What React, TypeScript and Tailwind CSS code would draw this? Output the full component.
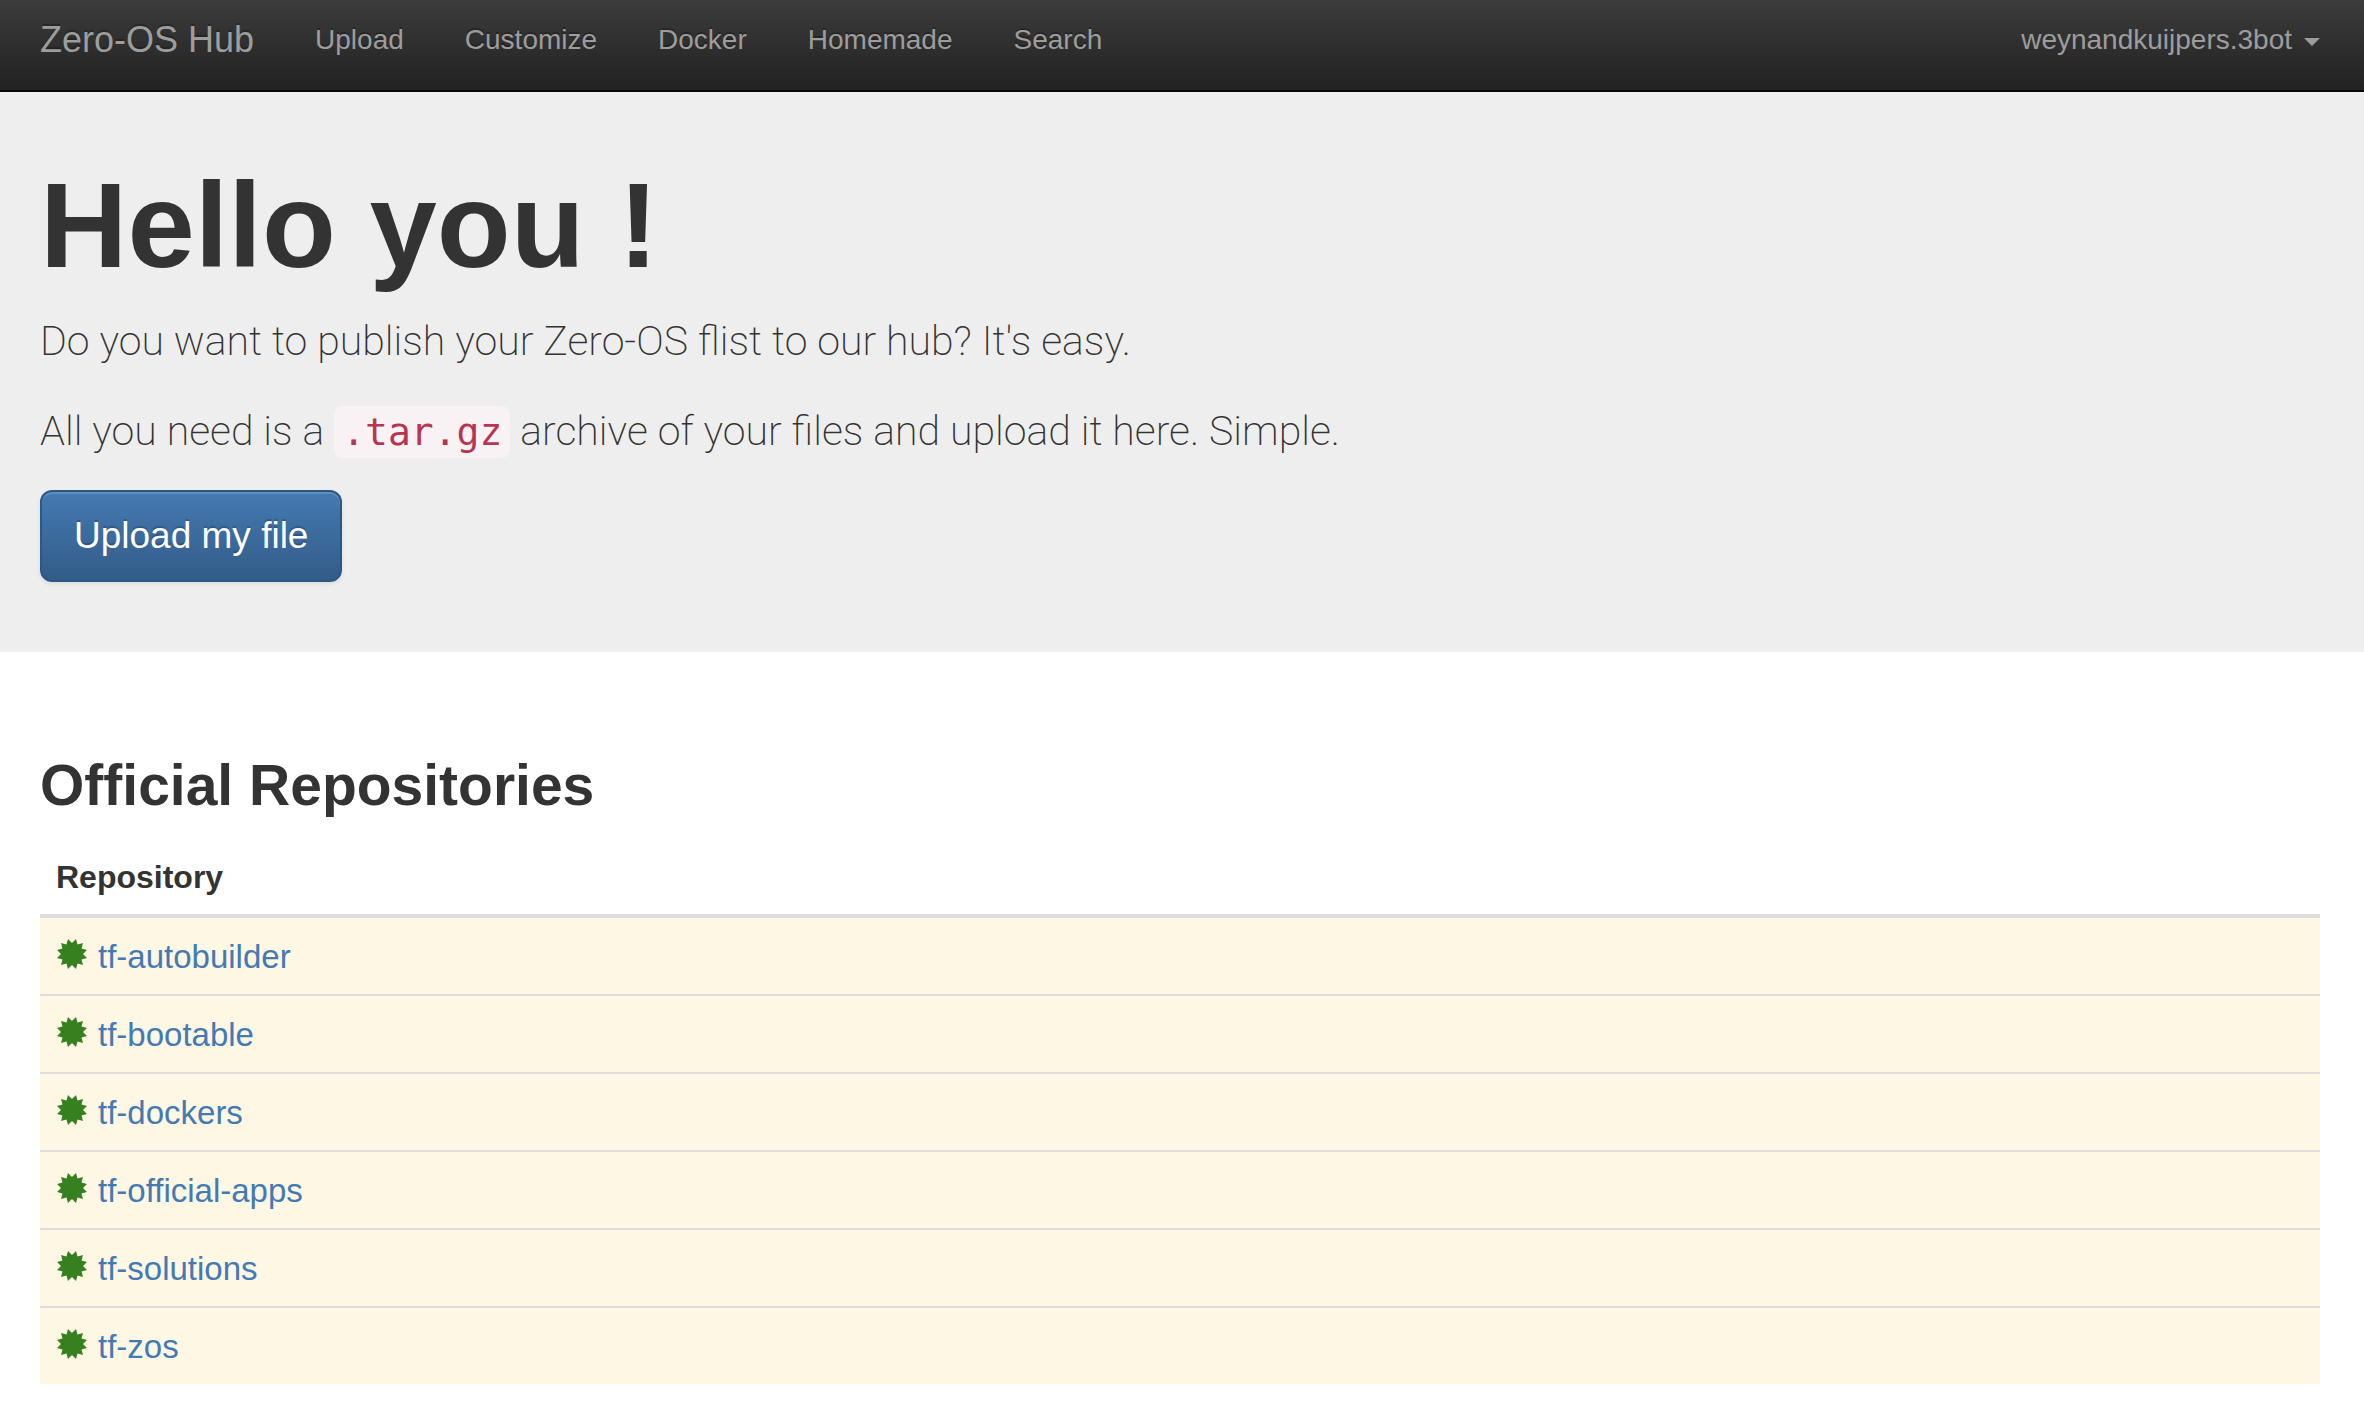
const navLinks = ["Upload", "Customize", "Docker", "Homemade", "Search"];

const repositories = [
  "tf-autobuilder",
  "tf-bootable",
  "tf-dockers",
  "tf-official-apps",
  "tf-solutions",
  "tf-zos",
];

function CertificateIcon() {
  // Twelve-pointed seal, outer radius 15.5 and inner radius 11.
  const points = Array.from({ length: 24 }, (_, i) => {
    const radius = i % 2 === 0 ? 11 : 15.5;
    const angle = (i * Math.PI) / 12;
    return `${(16 + radius * Math.sin(angle)).toFixed(2)},${(16 - radius * Math.cos(angle)).toFixed(2)}`;
  }).join(" ");
  return (
    <svg viewBox="0 0 32 32" className="mt-[3px] size-8 shrink-0" aria-hidden="true">
      <polygon points={points} fill="#378020" />
    </svg>
  );
}

function Navbar() {
  return (
    <header className="border-b-2 border-[#080808] bg-linear-to-b from-[#3c3c3c] to-[#222222] pr-11 pb-2.5 pl-10 text-[28px] text-[#9d9d9d] [text-shadow:0_-2px_0_rgba(0,0,0,0.25)]">
      <nav className="flex h-20 items-center gap-[61px]">
        <a href="#" className="text-4xl">
          Zero-OS Hub
        </a>
        {navLinks.map((label) => (
          <a key={label} href="#">
            {label}
          </a>
        ))}
        <button type="button" className="ml-auto flex items-center gap-3">
          weynandkuijpers.3bot
          <span className="mt-1 border-x-8 border-t-8 border-x-transparent border-t-[#9d9d9d]" />
        </button>
      </nav>
    </header>
  );
}

function Hero() {
  return (
    <section className="bg-[#eeeeee] pt-16 pr-11 pb-[70px] pl-10">
      <h1 className="mb-4 text-[121px] leading-[139px] font-bold">
        Hello you !
      </h1>
      <div className="font-['Roboto',sans-serif] text-[41px] leading-[60px] font-extralight">
        <p className="mb-[30px]">
          Do you want to publish your Zero-OS flist to our hub? It's easy.
        </p>
        <p className="mb-7">
          All you need is a{" "}
          <code className="rounded-lg bg-[#f8f2f4] px-2 py-1 font-['DejaVu_Sans_Mono',monospace] text-[38px] font-normal text-[#b8354f]">
            .tar.gz
          </code>{" "}
          archive of your files and upload it here. Simple.
        </p>
      </div>
      <button
        type="button"
        className="block rounded-xl border-2 border-[#2c5886] bg-linear-to-b from-[#447ab3] to-[#335c88] px-8 py-5 text-[37px] leading-[48px] text-white shadow-[inset_0_2px_0_rgba(255,255,255,0.15),0_2px_4px_rgba(0,0,0,0.075)] [text-shadow:0_-2px_0_rgba(0,0,0,0.2)]"
      >
        Upload my file
      </button>
    </section>
  );
}

function Repositories() {
  return (
    <section className="pt-[100px] pr-11 pb-8 pl-10">
      <h2 className="mb-5 text-[57px] leading-[66px] font-bold">
        Official Repositories
      </h2>
      <table className="w-full border-collapse text-left text-[32px] leading-[44px]">
        <thead>
          <tr className="border-b-4 border-[#dddddd]">
            <th scope="col" className="px-4 pt-[17px] pb-[15px] font-bold">
              Repository
            </th>
          </tr>
        </thead>
        <tbody className="text-[33px]">
          {repositories.map((name) => (
            <tr
              key={name}
              className="border-b-2 border-[#dddddd] bg-[#fdf7e4] last:border-b-0"
            >
              <td className="px-4 pt-[17px] pb-[15px]">
                <div className="flex items-start gap-2.5">
                  <CertificateIcon />
                  <a href="#" className="text-[#447ab3]">
                    {name}
                  </a>
                </div>
              </td>
            </tr>
          ))}
        </tbody>
      </table>
    </section>
  );
}

export default function App() {
  return (
    <div className="min-h-screen bg-white font-['Liberation_Sans',Arial,sans-serif] text-[#333333]">
      <Navbar />
      <main>
        <Hero />
        <Repositories />
      </main>
    </div>
  );
}
